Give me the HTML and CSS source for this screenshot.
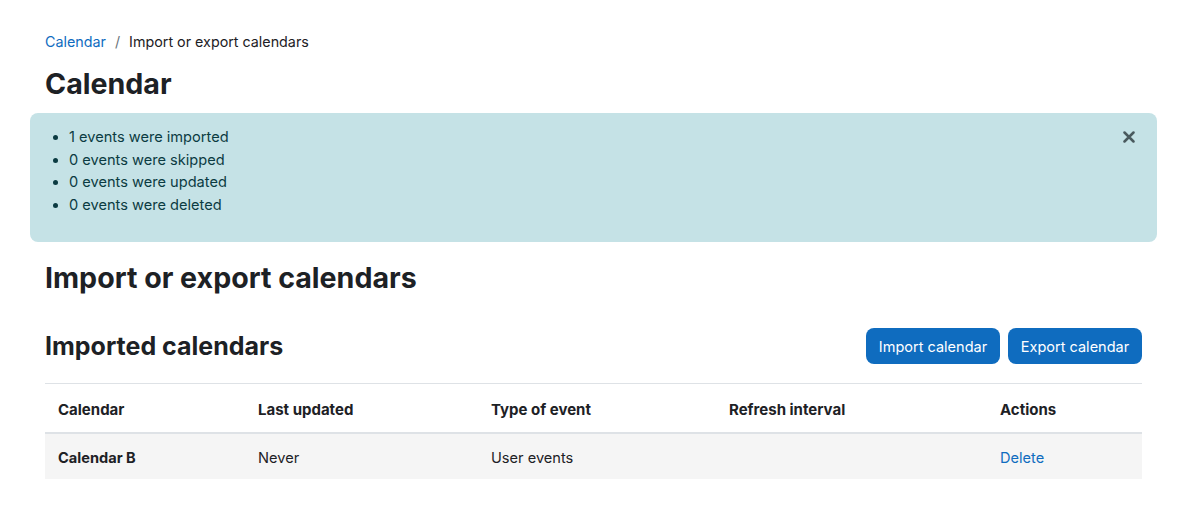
FILE: index.html
```html
<!DOCTYPE html>
<html lang="en">
<head>
<meta charset="utf-8">
<title>Calendar</title>
<link rel="stylesheet" href="styles.css">
</head>
<body>
<div class="page">
  <nav class="breadcrumb">
    <a href="#">Calendar</a>
    <span class="sep">/</span>
    <span>Import or export calendars</span>
  </nav>
  <h1 class="page-title">Calendar</h1>
  <div class="alert">
    <ul class="alert-list">
      <li>1 events were imported</li>
      <li>0 events were skipped</li>
      <li>0 events were updated</li>
      <li>0 events were deleted</li>
    </ul>
    <button class="alert-close" aria-label="Close">
      <svg width="12" height="12" viewBox="0 0 12 12"><path d="M1.5 1.5 L10.5 10.5 M10.5 1.5 L1.5 10.5" stroke="#4a5a5e" stroke-width="2.5" stroke-linecap="round"/></svg>
    </button>
  </div>
  <h2 class="section-title">Import or export calendars</h2>
  <div class="sub-header">
    <h3 class="sub-title">Imported calendars</h3>
    <div class="actions">
      <button class="btn">Import calendar</button>
      <button class="btn">Export calendar</button>
    </div>
  </div>
  <table class="cal-table">
    <colgroup>
      <col class="c1"><col class="c2"><col class="c3"><col class="c4"><col class="c5">
    </colgroup>
    <thead>
      <tr>
        <th>Calendar</th>
        <th>Last updated</th>
        <th>Type of event</th>
        <th>Refresh interval</th>
        <th>Actions</th>
      </tr>
    </thead>
    <tbody>
      <tr>
        <td class="name">Calendar B</td>
        <td>Never</td>
        <td>User events</td>
        <td></td>
        <td><a href="#">Delete</a></td>
      </tr>
    </tbody>
  </table>
</div>
</body>
</html>
```
FILE: styles.css
```css
* { box-sizing: border-box; }
html, body {
  margin: 0;
  background: #fff;
}
body {
  font-family: Inter, "Noto Sans", "Liberation Sans", sans-serif;
  font-size: 14.6px;
  line-height: 1.5;
  color: #1d2125;
}
a { color: #0f6cbf; text-decoration: none; }
.page {
  padding: 31px 48px 0 45px;
}
.breadcrumb {
  font-size: 14.3px;
  line-height: 22px;
  color: #1d2125;
}
.breadcrumb .sep {
  margin: 0 5px;
  color: #6a737b;
}
.page-title {
  font-size: 28.6px;
  font-weight: 700;
  line-height: 34px;
  margin: 14px 0 12px;
}
.alert {
  position: relative;
  margin: 0 -15px;
  background: #c5e2e6;
  color: #0b3b42;
  border-radius: 8px;
  padding: 13px 16px 11px 16px;
}
.alert-list {
  margin: 0 0 15px;
  padding-left: 23px;
  line-height: 22.5px;
}
.alert-close {
  position: absolute;
  top: 16px;
  right: 20px;
  background: none;
  border: 0;
  padding: 0;
  width: 16px;
  height: 16px;
  display: flex;
  align-items: center;
  justify-content: center;
}
.section-title {
  font-size: 28.6px;
  font-weight: 700;
  line-height: 34px;
  margin: 19px 0 0;
}
.sub-header {
  display: flex;
  align-items: center;
  justify-content: space-between;
  margin-top: 33px;
}
.sub-title {
  font-size: 25px;
  font-weight: 700;
  line-height: 30px;
  margin: 0;
}
.actions {
  display: flex;
  gap: 8px;
}
.btn {
  font-family: inherit;
  font-size: 14.5px;
  color: #fff;
  background: #0f6cbf;
  border: 0;
  border-radius: 8px;
  height: 36px;
  width: 134px;
  padding: 0;
}
.cal-table {
  width: 100%;
  margin-top: 19px;
  border-collapse: collapse;
}
.c1 { width: 200px; }
.c2 { width: 233px; }
.c3 { width: 238px; }
.c4 { width: 271px; }
.cal-table th {
  text-align: left;
  font-size: 15px;
  font-weight: 700;
  padding: 14px 13px 11px;
  line-height: 23px;
  border-top: 1px solid #dee2e6;
  border-bottom: 2px solid #dee2e6;
}
.cal-table td {
  padding: 13px 13px 10px;
  line-height: 22px;
  background: #f5f5f5;
}
.cal-table td.name { font-weight: 700; }
```
